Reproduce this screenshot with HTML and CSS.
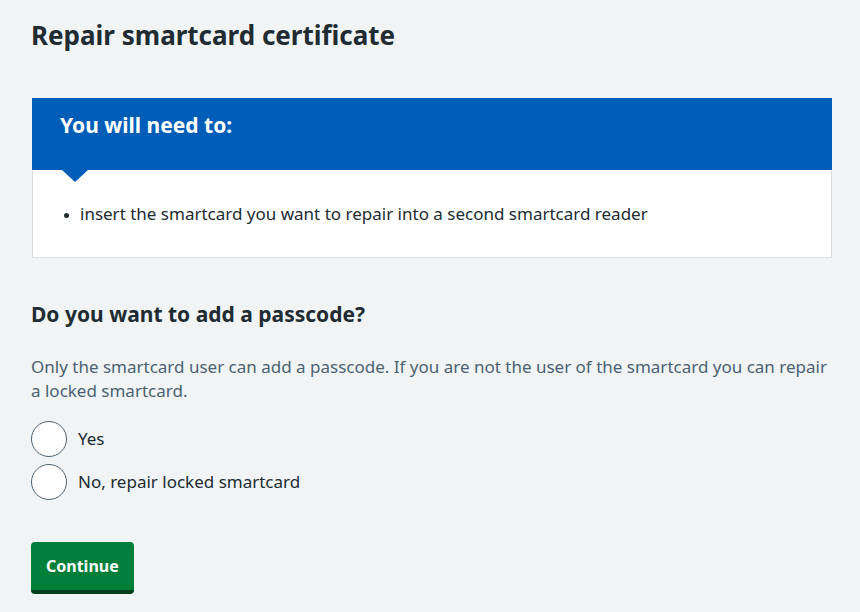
FILE: index.html
```html
<!DOCTYPE html>
<html lang="en">
<head>
<meta charset="utf-8">
<title>Repair smartcard certificate</title>
<link rel="stylesheet" href="styles.css">
</head>
<body>
<main class="page">
  <h1 class="title">Repair smartcard certificate</h1>

  <section class="card">
    <div class="card-header">
      <h2 class="card-heading">You will need to:</h2>
      <span class="card-arrow"></span>
    </div>
    <div class="card-body">
      <ul class="card-list">
        <li>insert the smartcard you want to repair into a second smartcard reader</li>
      </ul>
    </div>
  </section>

  <form class="form">
    <fieldset class="fieldset">
      <legend class="question">Do you want to add a passcode?</legend>
      <p class="hint">Only the smartcard user can add a passcode. If you are not the user of the smartcard you can repair a locked smartcard.</p>
      <div class="radios">
        <label class="radio">
          <input type="radio" name="passcode" value="yes" class="radio-input">
          <span class="radio-circle"></span>
          <span class="radio-label">Yes</span>
        </label>
        <label class="radio">
          <input type="radio" name="passcode" value="no" class="radio-input">
          <span class="radio-circle"></span>
          <span class="radio-label">No, repair locked smartcard</span>
        </label>
      </div>
    </fieldset>
    <button type="button" class="button">Continue</button>
  </form>
</main>
</body>
</html>
```
FILE: styles.css
```css
* { box-sizing: border-box; }

html, body {
  margin: 0;
  padding: 0;
  background: #f0f4f5;
}

body {
  font-family: "Noto Sans", "Open Sans", Arial, sans-serif;
  color: #212b32;
  font-size: 17px;
}

.page {
  padding: 19px 28px 0 31px;
}

.title {
  margin: 0;
  font-size: 26px;
  line-height: 32px;
  font-weight: 700;
  color: #212b32;
}

.card {
  margin: 47px 0 0 1px;
  width: 800px;
}

.card-header {
  position: relative;
  background: #005eb8;
  height: 72px;
  padding: 13px 28px 0 28px;
}

.card-heading {
  margin: 0;
  color: #ffffff;
  font-size: 21px;
  line-height: 28px;
  font-weight: 700;
}

.card-arrow {
  position: absolute;
  left: 30px;
  bottom: -12px;
  width: 0;
  height: 0;
  border-left: 13px solid transparent;
  border-right: 13px solid transparent;
  border-top: 12px solid #005eb8;
}

.card-body {
  background: #ffffff;
  border: 1px solid #d8dde0;
  border-top: 0;
  padding: 31px 28px 30px 28px;
}

.card-list {
  margin: 0;
  padding-left: 19px;
  font-size: 17px;
  line-height: 26px;
}

.card-list li::marker {
  font-size: 13px;
}

.form {
  margin-top: 42px;
}

.fieldset {
  border: 0;
  margin: 0;
  padding: 0;
}

.question {
  padding: 0;
  margin: 0;
  font-size: 21px;
  line-height: 28px;
  font-weight: 700;
  color: #212b32;
}

.hint {
  margin: 27px 0 0 0;
  color: #4c6272;
  font-size: 17px;
  line-height: 24px;
}

.radios {
  margin-top: 18px;
  display: flex;
  flex-direction: column;
  gap: 7px;
}

.radio {
  display: flex;
  align-items: center;
  gap: 11px;
  height: 36px;
  cursor: pointer;
}

.radio-input {
  position: absolute;
  opacity: 0;
  width: 1px;
  height: 1px;
  margin: 0;
}

.radio-circle {
  flex: none;
  width: 36px;
  height: 36px;
  border-radius: 50%;
  border: 1px solid #4c6272;
  background: #ffffff;
}

.radio-label {
  font-size: 17px;
  line-height: 24px;
  color: #212b32;
}

.button {
  display: block;
  margin-top: 42px;
  background: #007f3b;
  color: #ffffff;
  border: 0;
  border-bottom: 4px solid #00401e;
  border-radius: 4px;
  height: 52px;
  padding: 0 15px;
  font-family: "Noto Sans", "Open Sans", Arial, sans-serif;
  font-size: 16px;
  font-weight: 700;
  line-height: 24px;
  cursor: pointer;
}
```
